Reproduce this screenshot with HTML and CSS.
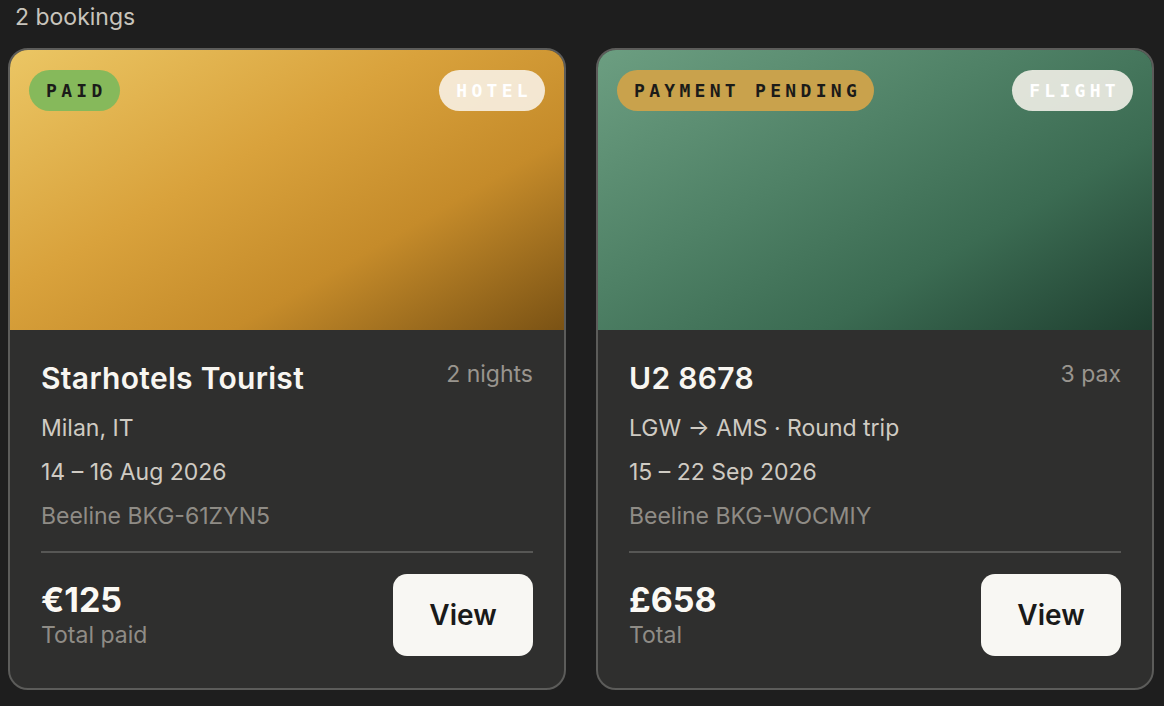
FILE: index.html
```html
<!DOCTYPE html>
<html lang="en">
  <head>
    <meta charset="UTF-8" />
    <meta name="viewport" content="width=device-width, initial-scale=1.0" />
    <title>My bookings</title>
    <link rel="stylesheet" href="styles.css">
  </head>
  <body>
    <p class="count">2 bookings</p>

    <div class="bookings">
      <!-- Hotel booking -->
      <div class="booking">
        <div class="cover cover-hotel">
          <span class="pill pill-paid">PAID</span>
          <span class="pill pill-type">HOTEL</span>
        </div>
        <div class="details">
          <div class="head">
            <h3>Starhotels Tourist</h3>
            <span class="extra">2 nights</span>
          </div>
          <div class="line">Milan, IT</div>
          <div class="line">14 – 16 Aug 2026</div>
          <div class="line ref">Beeline BKG-61ZYN5</div>
          <div class="foot">
            <div>
              <div class="price">€125</div>
              <div class="price-label">Total paid</div>
            </div>
            <button>View</button>
          </div>
        </div>
      </div>

      <!-- Flight booking -->
      <div class="booking">
        <div class="cover cover-flight">
          <span class="pill pill-pending">PAYMENT PENDING</span>
          <span class="pill pill-type">FLIGHT</span>
        </div>
        <div class="details">
          <div class="head">
            <h3>U2 8678</h3>
            <span class="extra">3 pax</span>
          </div>
          <div class="line">LGW → AMS · Round trip</div>
          <div class="line">15 – 22 Sep 2026</div>
          <div class="line ref">Beeline BKG-WOCMIY</div>
          <div class="foot">
            <div>
              <div class="price">£658</div>
              <div class="price-label">Total</div>
            </div>
            <button>View</button>
          </div>
        </div>
      </div>
    </div>
  </body>
</html>
```

FILE: styles.css
```css
body {
  margin: 0;
  padding: 0 10px 0 8px;
  background: #1e1e1e;
  font-family: "Inter", "Noto Sans", sans-serif;
  color: #f5f3ee;
}
.count {
  margin: 0;
  padding: 3px 0 0 7px;
  height: 45px;
  font-size: 23px;
  line-height: 28px;
  color: #c8c4bc;
}
.bookings {
  display: grid;
  grid-template-columns: 558px 558px;
  gap: 30px;
}
.booking {
  border: 2px solid #5c5c5a;
  border-radius: 20px;
  overflow: hidden;
  background: #2f2f2e;
}
.cover {
  height: 280px;
  padding: 20px 19px;
  box-sizing: border-box;
  display: flex;
  justify-content: space-between;
  align-items: flex-start;
}
.cover-hotel {
  background: linear-gradient(150deg, #ebc664 0%, #d9a23c 40%, #c58b2a 68%, #7a5214 100%);
}
.cover-flight {
  background: linear-gradient(150deg, #6c9e81 0%, #4f8166 40%, #3b6b52 68%, #1f3f30 100%);
}
.pill {
  font-family: "DejaVu Sans Mono", monospace;
  font-weight: bold;
  font-size: 18px;
  letter-spacing: 4.3px;
  line-height: 21px;
  padding: 10px 13px 10px 17px;
  border-radius: 21px;
  color: #1b1b19;
}
.pill-paid {
  background: #86b95b;
}
.pill-pending {
  background: #c9a24c;
}
.pill-type {
  background: rgba(250, 246, 238, 0.85);
  color: #ffffff;
}
.details {
  padding: 30px 31px 32px 31px;
}
.head {
  display: flex;
  justify-content: space-between;
  align-items: flex-start;
  margin-bottom: 10px;
}
h3 {
  margin: 0;
  font-size: 30px;
  font-weight: 600;
  letter-spacing: 0.3px;
  color: #f8f6f1;
}
.extra {
  font-size: 23px;
  color: #99958e;
}
.line {
  font-size: 23px;
  line-height: 44px;
  color: #cfcbc3;
}
.ref {
  color: #8f8c86;
}
.foot {
  margin-top: 13px;
  padding-top: 21px;
  border-top: 2px solid #575755;
  display: flex;
  justify-content: space-between;
  align-items: center;
}
.price {
  font-size: 34px;
  font-weight: 700;
  line-height: 40px;
  color: #fbf9f4;
}
.price-label {
  font-size: 23px;
  line-height: 30px;
  color: #8f8c86;
}
button {
  width: 140px;
  height: 82px;
  border: none;
  border-radius: 14px;
  background: #f8f7f3;
  color: #1a1a19;
  font-family: inherit;
  font-size: 28px;
  font-weight: 600;
  cursor: pointer;
}
```
